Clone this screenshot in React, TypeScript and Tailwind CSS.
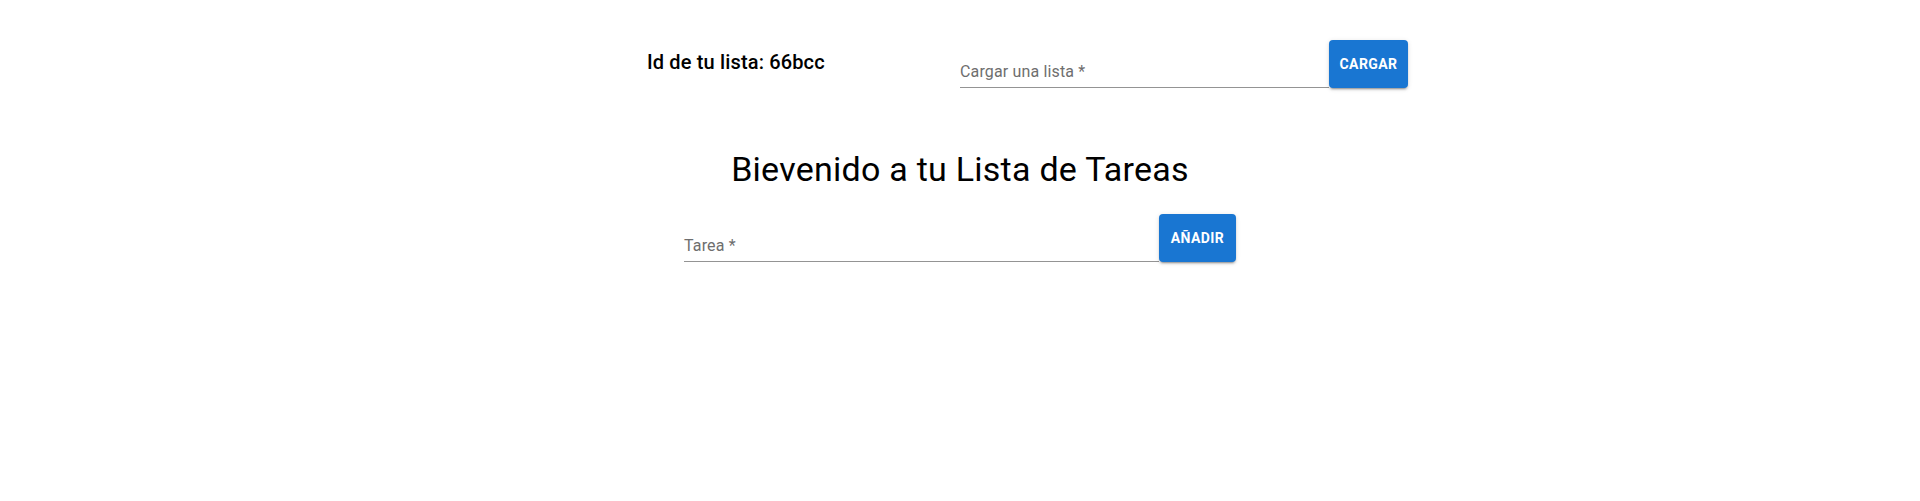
import React from "react";

const shadow =
  "shadow-[0px_3px_1px_-2px_rgba(0,0,0,0.2),0px_2px_2px_0px_rgba(0,0,0,0.14),0px_1px_5px_0px_rgba(0,0,0,0.12)]";

function Field({ label, width }: { label: string; width: string }) {
  return (
    <div className={`${width} h-[48px] flex flex-col justify-end pb-[4px] border-b border-[#949494]`}>
      <span className="text-[16px] leading-[23px] text-[#6e6e6e] tracking-[0.15px]">{label}</span>
    </div>
  );
}

function Btn({ text, width }: { text: string; width: string }) {
  return (
    <button
      className={`${width} h-[48px] rounded-[4px] bg-[#1976d2] text-white text-[14px] font-bold tracking-[0.4px] uppercase flex items-center justify-center ${shadow}`}
    >
      {text}
    </button>
  );
}

export default function App() {
  return (
    <div className="w-full min-h-[501px] bg-white text-black" style={{ fontFamily: "Roboto, 'Liberation Sans', sans-serif" }}>
      <div className="flex justify-center pl-[135px] pt-[40px]">
        <div className="flex h-[48px]">
          <div className="w-[313px] pt-[6px]">
            <span className="text-[20px] leading-[32px] font-medium tracking-[0.15px]">Id de tu lista: 66bcc</span>
          </div>
          <Field label="Cargar una lista *" width="w-[369px]" />
          <Btn text="Cargar" width="w-[79px]" />
        </div>
      </div>
      <h1 className="mt-[60px] text-center text-[34px] leading-[42px] font-normal tracking-[0.25px]">
        Bievenido a tu Lista de Tareas
      </h1>
      <div className="mt-[24px] flex justify-center">
        <Field label="Tarea *" width="w-[475px]" />
        <Btn text="Añadir" width="w-[77px]" />
      </div>
    </div>
  );
}
